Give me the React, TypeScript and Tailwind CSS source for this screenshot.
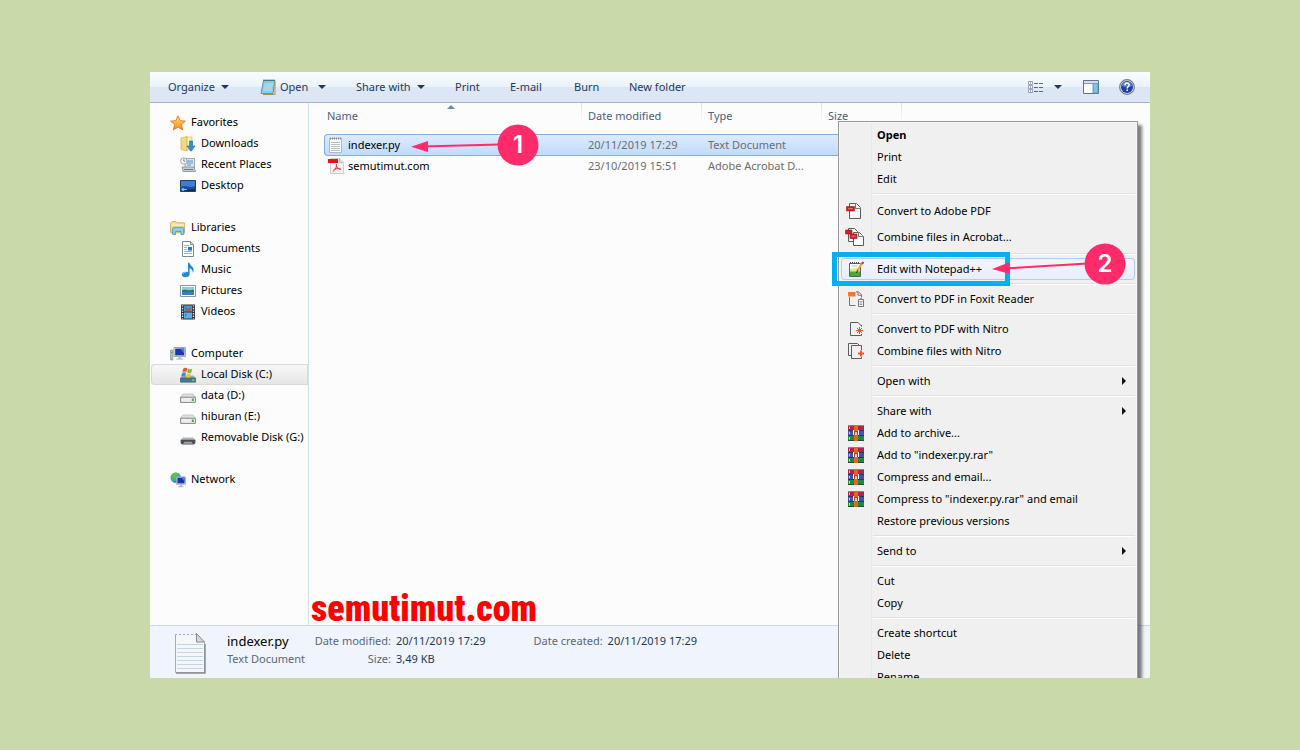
import type { ReactNode } from "react";
import clsx from "clsx";

type IconProps = { className?: string };

function Svg({ children, className }: { children: ReactNode; className?: string }) {
  return (
    <svg viewBox="0 0 16 16" aria-hidden="true" className={clsx("h-4 w-4 shrink-0", className)}>
      {children}
    </svg>
  );
}

function Caret({ className }: IconProps) {
  return (
    <svg viewBox="0 0 8 4" aria-hidden="true" className={clsx("h-1 w-2 shrink-0", className)}>
      <path d="M0 0h8L4 4z" fill="#1e395b" />
    </svg>
  );
}

/* ---------- sidebar icons ---------- */

function StarIcon() {
  return (
    <Svg>
      <defs>
        <linearGradient id="star" x1="0" y1="0" x2="0" y2="1">
          <stop offset="0" stopColor="#ffe9a0" />
          <stop offset="0.5" stopColor="#fdb53a" />
          <stop offset="1" stopColor="#f58a1f" />
        </linearGradient>
      </defs>
      <path d="M8 .8l2.1 4.9 5.3.4-4 3.5 1.3 5.3L8 12.1l-4.7 2.8 1.3-5.3-4-3.5 5.3-.4z" fill="url(#star)" stroke="#d97a1c" strokeWidth=".9" />
    </Svg>
  );
}

function DownloadsIcon() {
  return (
    <Svg>
      <path d="M1 2l6-1.5V15l-6-1.5z" fill="#f3d983" stroke="#c9a54a" strokeWidth=".6" />
      <path d="M7 1h5v13H7z" fill="#fbeeb5" stroke="#d1b058" strokeWidth=".6" />
      <path d="M9.5 5h3v5H15l-4 5.3L7 10h2.5z" fill="#2b93dc" stroke="#1868ad" strokeWidth=".6" />
    </Svg>
  );
}

function RecentIcon() {
  return (
    <Svg>
      <path d="M5 1.5h9.5v10H5z" fill="#dfe5ea" stroke="#8b959e" strokeWidth=".8" />
      <path d="M7 4h6M7 6h6M7 8h4" stroke="#4d9ac9" />
      <path d="M2 10h12l1.5 4.5H3z" fill="#c4ccd3" stroke="#87919a" strokeWidth=".8" />
      <path d="M4 12.5h9" stroke="#6f7a84" />
      <circle cx="3.8" cy="4" r="3.2" fill="#f4f6f8" stroke="#8b959e" strokeWidth=".8" />
      <path d="M3.8 2v2.2h1.6" fill="none" stroke="#555" strokeWidth=".7" />
    </Svg>
  );
}

function DesktopIcon() {
  return (
    <Svg>
      <path d="M.5 2.5h15v11H.5z" fill="#1b4b9e" stroke="#2a3d5c" />
      <path d="M1 3h14v5C10 11 5 6 1 9z" fill="#3b7ed2" />
      <path d="M1 11.5h14V13H1z" fill="#14284d" />
      <circle cx="3" cy="11.5" r="1.6" fill="#6fc3ef" />
      <path d="M4 11.5h3" stroke="#ffb037" />
    </Svg>
  );
}

function LibrariesIcon() {
  return (
    <Svg>
      <path d="M.6 3.2L2 1.6h4l1 1.2h7.4v10H.6z" fill="#f6e18c" stroke="#c3a24b" strokeWidth=".8" />
      <path d="M1 5h13.5" stroke="#fdf6c9" />
      <path d="M2.6 14.4V8.8c0-.9.7-1.5 1.5-1.5h8.2c.8 0 1.5.6 1.5 1.5v5.6H11v-3H5.5v3z" fill="#8fcdec" stroke="#3d8fbf" strokeWidth=".8" />
    </Svg>
  );
}

function DocumentsIcon() {
  return (
    <Svg>
      <path d="M2.500.5h8l3 3v12h-11z" fill="#fff" stroke="#7d8790" />
      <path d="M10.500.5v3h3" fill="#d9dee2" stroke="#7d8790" />
      <path d="M4 4.500h5M4 6.500h3M4 8.500h3M4 10.500h8M4 12.500h8" stroke="#9fb4c8" />
      <path d="M8 6h4v3.500H8z" fill="#2c74c4" />
    </Svg>
  );
}

function MusicIcon() {
  return (
    <Svg>
      <path d="M8 .8h1.500c.3 2.600 3.600 3.600 4.100 6.400.2 1.500-.2 2.700-.9 3.600.2-2.600-1-3.900-3.100-4.600v6c0 1.800-1.900 3.100-4.200 3.100-2.100 0-3.700-1-3.700-2.500 0-1.800 2-3 4.200-3 .8 0 1.500.1 2.100.4z" fill="#2488d6" />
      <path d="M3 12c.4-1 1.500-1.600 2.800-1.600" fill="none" stroke="#8fd0f7" />
    </Svg>
  );
}

function PicturesIcon() {
  return (
    <Svg>
      <path d="M.5 2.500h15v11H.5z" fill="#fff" stroke="#8a949d" />
      <path d="M2 4h12v4H2z" fill="#8cc7ee" />
      <path d="M2 7.500C5 5.500 8 8.500 14 6.500V9H2z" fill="#34773f" />
      <path d="M2 9h12v3H2z" fill="#2f83c2" />
    </Svg>
  );
}

function VideosIcon() {
  return (
    <Svg>
      <path d="M1 .5h14v15H1z" fill="#2b2f36" />
      <path d="M4 1.500h8v6H4z" fill="#3aa0e0" />
      <path d="M4 8.500h8v6H4z" fill="#56b4ea" />
      <path d="M5 2l3 3 3-2v3L8 7.500 5 6zM5 9.500l2 1.500-2 2z" fill="#b8563b" />
      <path d="M2.500 1.200v14M13.500 1.200v14" stroke="#dfe4e8" strokeWidth="1.400" strokeDasharray="1.400 1.200" />
    </Svg>
  );
}

function ComputerIcon() {
  return (
    <Svg>
      <path d="M.5 4h2.400v10H.5z" fill="#b4bcc3" stroke="#7f8890" strokeWidth=".6" />
      <path d="M1 6.500h1.500" stroke="#42b14b" />
      <path d="M4 1.500h11.400v9H4z" fill="#dfe4e9" stroke="#8a929b" strokeWidth=".8" />
      <path d="M5.200 2.600h9v6.800h-9z" fill="#1b36ad" />
      <path d="M10 2.600h4.200v5z" fill="#4f76e0" />
      <path d="M8.200 10.500h3v2h2v1.200h-7v-1.200h2z" fill="#b8c0c8" />
    </Svg>
  );
}

function SystemDiskIcon() {
  return (
    <Svg>
      <path d="M2.500 8.500h11l2 2.500v4H.5v-4z" fill="#8faab9" />
      <path d="M.5 11h15v4.200H.5z" fill="#48788f" stroke="#3c5662" strokeWidth=".6" />
      <path d="M12.300 12.200h2v2h-2z" fill="#5fe34b" />
      <path d="M3.300 1.400c1.500-.9 2.800-.7 4 0l-.9 3.700c-1.300-.7-2.500-.8-4 0z" fill="#e8542b" />
      <path d="M8 1.700c1.400.8 2.700.9 4.200.1l-1 3.700c-1.400.8-2.700.6-4 0z" fill="#7dbb35" />
      <path d="M2.100 5.900c1.400-.8 2.700-.7 4 0l-1 3.700c-1.300-.7-2.600-.8-4 0z" fill="#3b8fd8" />
      <path d="M7 6.200c1.300.8 2.600.9 4 .1l-.9 3.700c-1.500.8-2.800.6-4.100 0z" fill="#f8c22c" />
    </Svg>
  );
}

function DiskIcon() {
  return (
    <Svg>
      <path d="M3 6h10l2.400 3.500H.6z" fill="#dfe1e3" stroke="#a9adb0" strokeWidth=".6" />
      <path d="M.6 9.200h14.800v5.200H.6z" fill="#eceeef" stroke="#85898c" />
      <path d="M11.800 10.500h2v2.500h-2z" fill="#39b336" />
    </Svg>
  );
}

function RemovableIcon() {
  return (
    <Svg>
      <path d="M3 7.500h10l2.400 2.400H.6z" fill="#b3b6b9" />
      <path d="M.6 9.800h14.800v3.200L14 14.400H2L.6 13z" fill="#4a4d50" />
      <path d="M3 13.800l1.500-2h7l1.500 2z" fill="#a0a3a6" />
    </Svg>
  );
}

function NetworkIcon() {
  return (
    <Svg>
      <circle cx="5.800" cy="5.800" r="5.300" fill="#3aa0dc" />
      <path d="M2 2.200C4 .5 7 .2 9 1.500L6.500 4 5 7.500 2 6z" fill="#5fbf48" />
      <path d="M2.500 8.500l3 .5v2z" fill="#3f9a37" />
      <path d="M6.500 4.800h9v7.600h-9z" fill="#e1e6ea" stroke="#8e979f" strokeWidth=".6" />
      <path d="M7.400 5.600h7.200v5.800H7.400z" fill="#1a35ac" />
      <path d="M11 5.600h3.600v4z" fill="#4c74df" />
      <path d="M10 12.400h2v1.600h1.500v1.200h-5V14H10z" fill="#b3bbc3" />
    </Svg>
  );
}

/* ---------- file icons ---------- */

function TextFileIcon() {
  return (
    <Svg>
      <path d="M1.500 1.500h12v14h-12z" fill="#fdfdfd" stroke="#a5a9ac" strokeWidth=".8" />
      <path d="M2 1.500h11" stroke="#83888c" strokeDasharray="1 1" strokeWidth="2" />
      <path d="M3 5.500h9M3 7.500h9M3 9.500h9M3 11.500h9M3 13.500h9" stroke="#b9bfc4" />
    </Svg>
  );
}

function PdfFileIcon() {
  return (
    <Svg>
      <path d="M2.500.5h9l4 4v11h-13z" fill="#f3f3f3" stroke="#cfcfcf" />
      <path d="M11.500.5v4h4" fill="#dcdcdc" stroke="#bdbdbd" />
      <path d="M0 1h10v4H0z" fill="#e2150f" />
      <path d="M8.300 6c.8 2.600-.6 5.500-3.500 7.600M8 7.500c.7 2 2.600 3.600 5 4M5.600 11.600c1.900-.9 4.400-1.200 7-.7" fill="none" stroke="#e03a34" />
    </Svg>
  );
}

function NotepadIcon() {
  return (
    <Svg>
      <path d="M3.500 1.500h11.500l-2 13H1z" fill="#8ccbdb" stroke="#4f8797" strokeWidth=".8" />
      <path d="M15 2.500v13H3" fill="none" stroke="#b48b4a" />
      <path d="M3.500 1.300h11.500" stroke="#3c4c55" strokeDasharray="1 1" strokeWidth="1.600" />
      <path d="M4.500 5h8.500M4 7h8.500M3.600 9h8.500M3.300 11h8.500" stroke="#b9e4ee" />
    </Svg>
  );
}

function ViewIcon() {
  return (
    <Svg>
      <path d="M.5 2.500h4v3h-4zM.5 6.500h4v3h-4zM.5 10.500h4v3h-4z" fill="#fff" stroke="#8491a3" strokeWidth=".8" />
      <path d="M2 3.500h1v1H2z" fill="#2f9a3c" />
      <path d="M2 7.500h1v1H2z" fill="#d3231c" />
      <path d="M2 11.500h1v1H2z" fill="#2b55c4" />
      <path d="M6 4.500h4M11 4.500h4M6 8.500h4M11 8.500h4M6 12.500h4M11 12.500h4" stroke="#566a85" />
    </Svg>
  );
}

function PreviewPaneIcon() {
  return (
    <Svg>
      <path d="M.5 1.500h15v13H.5z" fill="#fdfdfe" stroke="#5f7390" />
      <path d="M1 2h14v2H1z" fill="#d6dfe9" />
      <path d="M1 4.500h9" stroke="#8796ab" />
      <path d="M10 4.500h5V14h-5z" fill="#7cc5dd" stroke="#4b92b0" strokeWidth=".8" />
    </Svg>
  );
}

function HelpIcon() {
  return (
    <Svg>
      <circle cx="8" cy="8" r="7.400" fill="#d7dade" stroke="#777c85" strokeWidth="1.100" />
      <circle cx="8" cy="8" r="6" fill="#1e3fa8" />
      <path d="M2.800 7a5.300 5.300 0 0110.400 0c-3 1.400-7.400 1.400-10.400 0z" fill="#5b80dc" />
      <path d="M5.900 6.200c.1-3 4.400-2.700 4.300-.2-.1 1.500-2 1.600-2 3.400M8.200 10.600v1.500" fill="none" stroke="#fff" strokeWidth="1.500" />
    </Svg>
  );
}

/* ---------- context menu icons ---------- */

function AdobeIcon() {
  return (
    <svg viewBox="0 0 20 16" aria-hidden="true" className="h-4 w-5 shrink-0">
      <path d="M3.500.5h7l4 4v11h-11z" fill="#f7f7f7" stroke="#5c5c5c" />
      <path d="M9.500.5v5h5" fill="#fff" stroke="#777" />
      <path d="M.5 3.500h8V8h-8z" fill="#cf1f2a" stroke="#a3141d" strokeWidth=".6" />
      <path d="M2 5.700h5" stroke="#e88188" />
    </svg>
  );
}

function CombineAdobeIcon() {
  return (
    <svg viewBox="0 0 22 18" aria-hidden="true" className="h-[18px] w-[22px] shrink-0">
      <path d="M3.500.5h6l3 3v10h-9z" fill="#f7f7f7" stroke="#5c5c5c" />
      <path d="M.5 2h6.500v4H.5z" fill="#cf1f2a" stroke="#a3141d" strokeWidth=".6" />
      <path d="M8.500 4.500h6l4 4v9h-10z" fill="#fafafa" stroke="#5c5c5c" />
      <path d="M13.500 4.500v4h5" fill="#fff" stroke="#777" />
      <path d="M5 6h7v4.500H5z" fill="#cf1f2a" stroke="#a3141d" strokeWidth=".6" />
      <path d="M6.500 8.200h4" stroke="#e88188" />
    </svg>
  );
}

function NotepadPlusIcon() {
  return (
    <Svg>
      <path d="M1.500 2.500h11v13h-11z" fill="#fdfdfd" stroke="#5d6260" />
      <path d="M2 8l10-1.500V11H2z" fill="#d6ee8a" />
      <path d="M2 10.500h10V15H2z" fill="#45a935" />
      <path d="M2 1.800h10" stroke="#4b4b4b" strokeWidth="1.600" strokeDasharray="1 1" />
      <path d="M3.500 5h6" stroke="#b7bcc0" />
      <path d="M14.500 1.500L9 10.500" stroke="#e7a52b" strokeWidth="2" />
      <path d="M15.500 1l-1.500 2" stroke="#b0432b" strokeWidth="2" />
      <path d="M9.800 9.200L8.300 12" stroke="#333" />
    </Svg>
  );
}

function FoxitIcon() {
  return (
    <Svg>
      <path d="M8 .8h2.500l3 3v2.700M1.500 6v8.500h6" fill="none" stroke="#777" />
      <path d="M10 .8v3.400h3.500" fill="none" stroke="#777" />
      <path d="M0 1h7.500v4.500H0z" fill="#f47b20" />
      <path d="M10.500 8.500h5v7h-5z" fill="#fff" stroke="#777" />
      <path d="M11.500 10.500h3M11.500 12h3M11.500 13.500h3M12 7.500h2" stroke="#888" strokeWidth=".8" />
    </Svg>
  );
}

function NitroIcon() {
  return (
    <Svg>
      <path d="M13.500 4v1.500M10 1.500H2.500v13h11V13M10 1.500l3.500 3.500" fill="none" stroke="#5c5c5c" />
      <path d="M11.500 6v7M8 9.500h7M9 7l5 5M14 7l-5 5" stroke="#f05a22" />
    </Svg>
  );
}

function CombineNitroIcon() {
  return (
    <Svg>
      <path d="M3 12.500H.5V.5h9l1.500 1.500" fill="none" stroke="#5c5c5c" />
      <path d="M13.500 7V2.500h-10v13h10V14" fill="none" stroke="#5c5c5c" />
      <path d="M13 7.500v6M10 10.500h6" stroke="#f05a22" strokeWidth="2" />
    </Svg>
  );
}

function RarIcon() {
  return (
    <Svg>
      <path d="M0 0h16v5H0z" fill="#b3224e" />
      <path d="M0 5h16v6H0z" fill="#4650b4" />
      <path d="M0 11h16v5H0z" fill="#1c8c3a" />
      <path d="M0 .5h16" stroke="#d65c80" />
      <path d="M0 5.500h16M0 10.500h16M0 15.500h16" stroke="#20243a" strokeWidth=".6" />
      <path d="M6 0h4v16H6z" fill="#e8641d" />
      <path d="M1.500 1.500v2.500M1.500 6.800v2.500M1.500 12v2.500" stroke="#f2d64b" />
      <path d="M5 6h6v4H5z" fill="#c33b28" />
      <path d="M5.500 5v5M10.500 5v5M7 9.500h2" stroke="#fff" />
      <path d="M7.500 7v3M8.500 7v3" stroke="#f4e4dc" strokeWidth=".8" />
    </Svg>
  );
}

/* ---------- data ---------- */

const TREE = [
  {
    label: "Favorites",
    icon: <StarIcon />,
    items: [
      { label: "Downloads", icon: <DownloadsIcon /> },
      { label: "Recent Places", icon: <RecentIcon /> },
      { label: "Desktop", icon: <DesktopIcon /> },
    ],
  },
  {
    label: "Libraries",
    icon: <LibrariesIcon />,
    items: [
      { label: "Documents", icon: <DocumentsIcon /> },
      { label: "Music", icon: <MusicIcon /> },
      { label: "Pictures", icon: <PicturesIcon /> },
      { label: "Videos", icon: <VideosIcon /> },
    ],
  },
  {
    label: "Computer",
    icon: <ComputerIcon />,
    items: [
      { label: "Local Disk (C:)", icon: <SystemDiskIcon />, selected: true },
      { label: "data (D:)", icon: <DiskIcon /> },
      { label: "hiburan (E:)", icon: <DiskIcon /> },
      { label: "Removable Disk (G:)", icon: <RemovableIcon /> },
    ],
  },
  { label: "Network", icon: <NetworkIcon />, items: [] },
];

type MenuEntry = {
  label: string;
  icon?: ReactNode;
  bold?: boolean;
  tall?: boolean;
  active?: boolean;
  submenu?: boolean;
};

const MENU: MenuEntry[][] = [
  [{ label: "Open", bold: true }, { label: "Print" }, { label: "Edit" }],
  [
    { label: "Convert to Adobe PDF", icon: <AdobeIcon />, tall: true },
    { label: "Combine files in Acrobat...", icon: <CombineAdobeIcon />, tall: true },
  ],
  [{ label: "Edit with Notepad++", icon: <NotepadPlusIcon />, active: true }],
  [{ label: "Convert to PDF in Foxit Reader", icon: <FoxitIcon /> }],
  [
    { label: "Convert to PDF with Nitro", icon: <NitroIcon /> },
    { label: "Combine files with Nitro", icon: <CombineNitroIcon /> },
  ],
  [{ label: "Open with", submenu: true }],
  [
    { label: "Share with", submenu: true },
    { label: "Add to archive...", icon: <RarIcon /> },
    { label: 'Add to "indexer.py.rar"', icon: <RarIcon /> },
    { label: "Compress and email...", icon: <RarIcon /> },
    { label: 'Compress to "indexer.py.rar" and email', icon: <RarIcon /> },
    { label: "Restore previous versions" },
  ],
  [{ label: "Send to", submenu: true }],
  [{ label: "Cut" }, { label: "Copy" }],
  [{ label: "Create shortcut" }, { label: "Delete" }, { label: "Rename" }],
];

/* ---------- parts ---------- */

function Toolbar() {
  return (
    <header className="flex h-[31px] items-center border-b border-[#a0b3cf] bg-linear-to-b from-[#fafdff] from-0% via-[#e9f2fb] via-50% to-[#dce6f4] to-50% pr-[15px] pl-[18px] text-[#1e395b]">
      <button className="flex w-[92px] items-center gap-1.5">
        Organize <Caret />
      </button>
      <button className="flex w-[58px] items-center gap-1">
        <NotepadIcon /> Open
      </button>
      <button aria-label="Open options" className="w-[38px]">
        <Caret />
      </button>
      <button className="flex w-[99px] items-center gap-1.5">
        Share with <Caret />
      </button>
      <button className="w-[55px] text-left">Print</button>
      <button className="w-16 text-left">E-mail</button>
      <button className="w-[55px] text-left">Burn</button>
      <button className="text-left">New folder</button>
      <div className="ml-auto flex items-center">
        <button aria-label="Change your view" className="flex items-center gap-[10px]">
          <ViewIcon />
          <Caret />
        </button>
        <button aria-label="Preview pane" className="ml-[21px]">
          <PreviewPaneIcon />
        </button>
        <button aria-label="Help" className="ml-5">
          <HelpIcon />
        </button>
      </div>
    </header>
  );
}

function Sidebar() {
  return (
    <nav className="flex w-[159px] shrink-0 flex-col gap-[21px] border-r border-[#cfe2f3] pt-[9px] whitespace-nowrap text-black">
      {TREE.map((group) => (
        <div key={group.label}>
          <a href="#" className="flex h-[21px] items-center gap-[5px] pl-5">
            {group.icon}
            {group.label}
          </a>
          {group.items.map((item) => (
            <a
              key={item.label}
              href="#"
              className={clsx(
                "ml-px flex h-[21px] items-center gap-[5px] pl-[29px]",
                "selected" in item && "rounded-l-sm bg-linear-to-b from-[#f8f8f8] to-[#e5e5e5] inset-ring inset-ring-[#d9d9d9]"
              )}
            >
              {item.icon}
              {item.label}
            </a>
          ))}
        </div>
      ))}
    </nav>
  );
}

const TH =
  "bg-linear-to-b from-[#d3e3f2] to-[#fcfcfc] bg-[length:1px_20px] bg-[position:right_top] bg-no-repeat text-left font-normal";
const SELECTED_TD = "border-y border-[#84acdd] bg-linear-to-b from-[#dcebfc] to-[#c1dbfc]";

function FileList() {
  return (
    <div className="relative min-w-0 flex-1 pl-[15px]">
      <svg viewBox="0 0 8 4" aria-hidden="true" className="absolute top-0.5 left-[138px] h-1 w-2">
        <path d="M0 4l4-4 4 4z" fill="#5b8fae" />
      </svg>
      <table className="w-[578px] table-fixed border-separate border-spacing-0 whitespace-nowrap">
        <colgroup>
          <col className="w-[258px]" />
          <col className="w-[120px]" />
          <col className="w-[120px]" />
          <col />
        </colgroup>
        <thead className="text-[#4c607a]">
          <tr className="h-[31px] align-top leading-[26px]">
            <th className={clsx(TH, "pl-[3px]")}>Name</th>
            <th className={clsx(TH, "pl-1.5")}>Date modified</th>
            <th className={clsx(TH, "pl-1.5")}>Type</th>
            <th className={clsx(TH, "pl-1.5")}>Size</th>
          </tr>
        </thead>
        <tbody className="text-[#6d6d6d]">
          <tr className="h-[22px]">
            <td className={clsx(SELECTED_TD, "rounded-l-sm border-l pl-[3px] text-black")}>
              <span className="flex items-center gap-1">
                <TextFileIcon />
                indexer.py
              </span>
            </td>
            <td className={clsx(SELECTED_TD, "pl-1.5")}>20/11/2019 17:29</td>
            <td className={clsx(SELECTED_TD, "pl-1.5")}>Text Document</td>
            <td className={clsx(SELECTED_TD, "rounded-r-sm border-r")} />
          </tr>
          <tr className="h-5">
            <td className="pl-1 text-black">
              <span className="flex items-center gap-1">
                <PdfFileIcon />
                semutimut.com
              </span>
            </td>
            <td className="pl-1.5">23/10/2019 15:51</td>
            <td className="pl-1.5">Adobe Acrobat D...</td>
            <td />
          </tr>
        </tbody>
      </table>
      <p className="absolute bottom-0 left-0.5 font-['Roboto_Condensed','Roboto',sans-serif] text-[36px] leading-8 font-black text-[#ff0000]">
        semutimut.com
      </p>
    </div>
  );
}

function DetailsPane() {
  return (
    <footer className="flex h-[53px] items-start border-t border-[#c8d6e8] bg-[#f0f4fc] pt-1.5 pl-6 whitespace-nowrap">
      <svg viewBox="0 0 32 42" aria-hidden="true" className="h-[42px] w-8 shrink-0">
        <path d="M1.500 2.500h21l8 8v30h-29z" fill="#f4f7f9" stroke="#a4a9ad" />
        <path d="M2 41h29V12" fill="none" stroke="#8a8f93" strokeWidth="1.500" />
        <path d="M3 2.500h20" stroke="#f0f4fc" strokeWidth="3" strokeDasharray="2 2" />
        <path d="M22.500 1.500v8.500h8z" fill="#d5d9dc" stroke="#878c90" />
        <path d="M3 12.500h26M3 16.500h26M3 20.500h26M3 24.500h26M3 28.500h26M3 32.500h26M3 36.500h26" stroke="#c3d7e3" />
      </svg>
      <div className="ml-[21px] w-[87px] leading-[18px]">
        <p className="text-[13px] text-black">indexer.py</p>
        <p className="text-[#5a6779]">Text Document</p>
      </div>
      <dl className="grid grid-cols-[77px_1fr] gap-x-[5px] leading-[18px] text-[#1e395b]">
        <dt className="text-right text-[#5a6779]">Date modified:</dt>
        <dd>20/11/2019 17:29</dd>
        <dt className="text-right text-[#5a6779]">Size:</dt>
        <dd>3,49 KB</dd>
      </dl>
      <dl className="ml-12 flex gap-[5px] leading-[18px] text-[#1e395b]">
        <dt className="text-[#5a6779]">Date created:</dt>
        <dd>20/11/2019 17:29</dd>
      </dl>
    </footer>
  );
}

function ContextMenu() {
  return (
    <div
      role="menu"
      className="absolute top-[49px] left-[688px] w-[300px] border border-[#979797] bg-[#f0f0f0] bg-linear-to-r from-[#f0f0f0] from-[32px] via-[#e0e1e1] via-[32px] to-[#f0f0f0] to-[33px] p-0.5 text-black shadow-[4px_4px_3px_rgba(0,0,0,0.5)] inset-ring inset-ring-[#f7f7f7]"
    >
      {MENU.map((group, i) => (
        <div key={i}>
          {i > 0 && <hr className="mt-[3px] mb-[3px] ml-8 h-0.5 border-t border-b border-t-[#e0e0e0] border-b-white" />}
          {group.map((item) => (
            <button
              key={item.label}
              role="menuitem"
              className={clsx(
                "flex w-full items-center rounded-sm text-left whitespace-nowrap",
                item.tall ? "h-[26px]" : "h-[22px]",
                item.bold && "font-bold",
                item.active && "bg-linear-to-b from-[#f3f6fb] to-[#e6eefb] inset-ring inset-ring-[#aecff7]"
              )}
            >
              <span className="flex w-9 shrink-0 justify-center pr-1.5">{item.icon}</span>
              <span className="flex-1">{item.label}</span>
              {item.submenu && (
                <svg viewBox="0 0 4 8" aria-hidden="true" className="mr-[9px] h-2 w-1">
                  <path d="M0 0l4 4-4 4z" fill="#111" />
                </svg>
              )}
            </button>
          ))}
        </div>
      ))}
    </div>
  );
}

// Numbered callouts drawn over the window
function Callouts() {
  return (
    <>
      <div className="absolute top-[180px] left-[682px] h-[34px] w-[178px] border-5 border-[#00b0f0]" />
      <svg viewBox="0 0 130 42" className="absolute top-[52px] left-[260px] h-[42px] w-[130px]">
        <path d="M12 22.500L90 20.500" stroke="#ff2b6a" strokeWidth="2" />
        <path d="M1 22.800L18 17v11z" fill="#ff2b6a" />
        <circle cx="108" cy="21" r="20.500" fill="#ff2b6a" />
        <text x="108" y="29" textAnchor="middle" fontFamily="Inter, sans-serif" fontSize="24" fontWeight="600" fill="#fff">
          1
        </text>
      </svg>
      <svg viewBox="0 0 136 42" className="absolute top-[171px] left-[840px] h-[42px] w-[136px]">
        <path d="M14 25.500L98 20.500" stroke="#ff2b6a" strokeWidth="2" />
        <path d="M2 26L19 19.500l1 11.500z" fill="#ff2b6a" />
        <circle cx="115" cy="21" r="20.500" fill="#ff2b6a" />
        <text x="115" y="29" textAnchor="middle" fontFamily="Inter, sans-serif" fontSize="24" fontWeight="600" fill="#fff">
          2
        </text>
      </svg>
    </>
  );
}

export default function App() {
  return (
    <main className="flex min-h-screen items-center justify-center bg-[#cad9a9] font-['Noto_Sans','Open_Sans',sans-serif] text-[11px]">
      <section className="relative w-full max-w-[1000px] overflow-hidden bg-[#fcfcfc]">
        <Toolbar />
        <div className="flex min-h-[522px]">
          <Sidebar />
          <FileList />
        </div>
        <DetailsPane />
        <ContextMenu />
        <Callouts />
      </section>
    </main>
  );
}
